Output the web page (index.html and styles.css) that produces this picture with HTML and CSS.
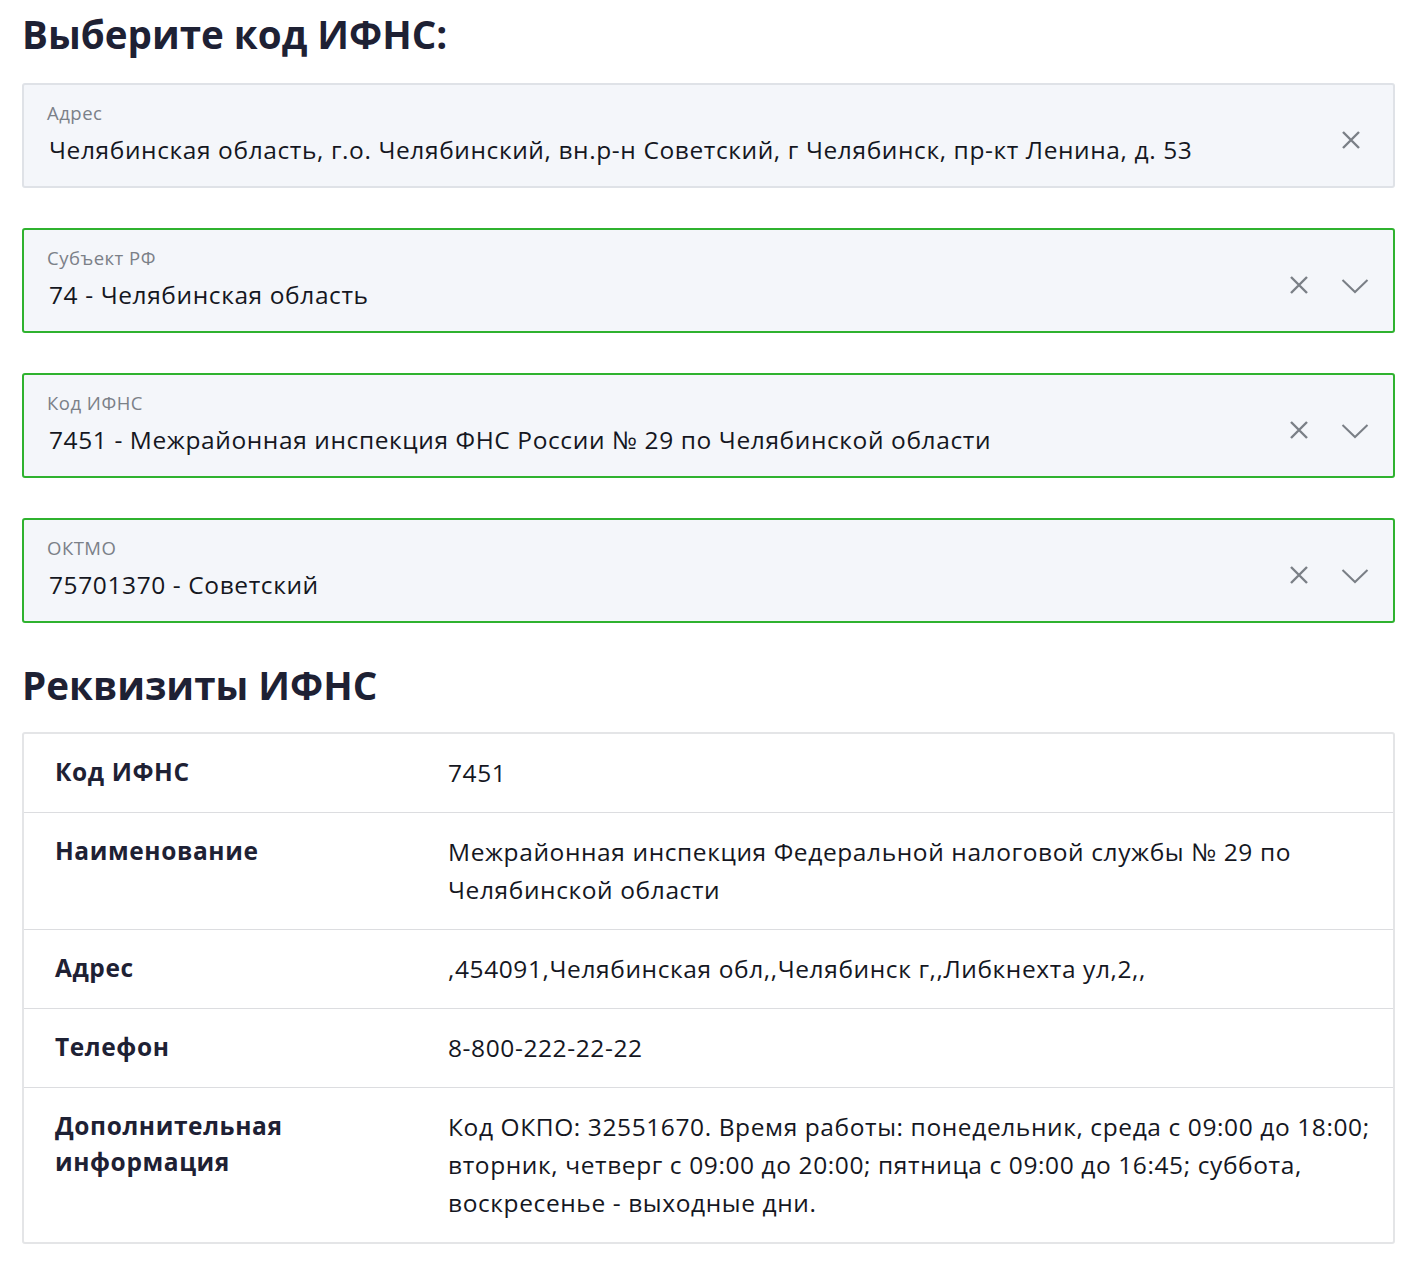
FILE: index.html
```html
<!DOCTYPE html>
<html lang="ru">
<head>
<meta charset="utf-8">
<title>Выберите код ИФНС</title>
<link rel="stylesheet" href="styles.css">
</head>
<body>
<main class="page">
  <h1 class="title">Выберите код ИФНС:</h1>

  <div class="fields">
    <div class="field">
      <div class="field-body">
        <div class="field-label">Адрес</div>
        <div class="field-value">Челябинская область, г.о. Челябинский, вн.р-н Советский, г Челябинск, пр-кт Ленина, д. 53</div>
      </div>
      <div class="field-icons field-icons-single">
        <svg class="icon-x" viewBox="0 0 20 20" width="20" height="20"><path d="M2 2 L18 18 M18 2 L2 18" stroke="#7a7f86" stroke-width="2.4" fill="none"/></svg>
      </div>
    </div>

    <div class="field field-ok">
      <div class="field-body">
        <div class="field-label">Субъект РФ</div>
        <div class="field-value">74 - Челябинская область</div>
      </div>
      <div class="field-icons">
        <svg class="icon-x" viewBox="0 0 20 20" width="20" height="20"><path d="M2 2 L18 18 M18 2 L2 18" stroke="#7a7f86" stroke-width="2.4" fill="none"/></svg>
        <svg class="icon-chev" viewBox="0 0 28 16" width="28" height="16"><path d="M1.5 2 L14 14 L26.5 2" stroke="#7a7f86" stroke-width="2" fill="none"/></svg>
      </div>
    </div>

    <div class="field field-ok">
      <div class="field-body">
        <div class="field-label">Код ИФНС</div>
        <div class="field-value">7451 - Межрайонная инспекция ФНС России № 29 по Челябинской области</div>
      </div>
      <div class="field-icons">
        <svg class="icon-x" viewBox="0 0 20 20" width="20" height="20"><path d="M2 2 L18 18 M18 2 L2 18" stroke="#7a7f86" stroke-width="2.4" fill="none"/></svg>
        <svg class="icon-chev" viewBox="0 0 28 16" width="28" height="16"><path d="M1.5 2 L14 14 L26.5 2" stroke="#7a7f86" stroke-width="2" fill="none"/></svg>
      </div>
    </div>

    <div class="field field-ok">
      <div class="field-body">
        <div class="field-label">ОКТМО</div>
        <div class="field-value">75701370 - Советский</div>
      </div>
      <div class="field-icons">
        <svg class="icon-x" viewBox="0 0 20 20" width="20" height="20"><path d="M2 2 L18 18 M18 2 L2 18" stroke="#7a7f86" stroke-width="2.4" fill="none"/></svg>
        <svg class="icon-chev" viewBox="0 0 28 16" width="28" height="16"><path d="M1.5 2 L14 14 L26.5 2" stroke="#7a7f86" stroke-width="2" fill="none"/></svg>
      </div>
    </div>
  </div>

  <h2 class="title title-2">Реквизиты ИФНС</h2>

  <div class="details">
    <div class="row">
      <div class="cell-key">Код ИФНС</div>
      <div class="cell-val">7451</div>
    </div>
    <div class="row">
      <div class="cell-key">Наименование</div>
      <div class="cell-val">Межрайонная инспекция Федеральной налоговой службы № 29 по Челябинской области</div>
    </div>
    <div class="row">
      <div class="cell-key">Адрес</div>
      <div class="cell-val">,454091,Челябинская обл,,Челябинск г,,Либкнехта ул,2,,</div>
    </div>
    <div class="row">
      <div class="cell-key">Телефон</div>
      <div class="cell-val">8-800-222-22-22</div>
    </div>
    <div class="row">
      <div class="cell-key">Дополнительная информация</div>
      <div class="cell-val">Код ОКПО: 32551670. Время работы: понедельник, среда с 09:00 до 18:00; вторник, четверг с 09:00 до 20:00; пятница с 09:00 до 16:45; суббота, воскресенье - выходные дни.</div>
    </div>
  </div>
</main>
</body>
</html>
```

FILE: styles.css
```css
* { box-sizing: border-box; }

html, body {
  margin: 0;
  padding: 0;
  background: #ffffff;
}

body {
  font-family: "Open Sans", "Noto Sans", "Liberation Sans", sans-serif;
  color: #15171f;
}

.page {
  padding: 8px 23px 24px 22px;
}

.title {
  margin: 0;
  font-size: 38.6px;
  line-height: 52px;
  font-weight: 700;
  color: #1e2134;
}

.fields {
  margin-top: 23px;
  display: flex;
  flex-direction: column;
  gap: 40px;
}

.field {
  height: 105px;
  display: flex;
  align-items: center;
  background: #f4f6fa;
  border: 2px solid #dfe2e7;
  border-radius: 3px;
  padding: 0 25px 0 23px;
}

.field-ok {
  border-color: #2fb22f;
}

.field-body {
  flex: 1;
  min-width: 0;
  padding-bottom: 4px;
}

.field-label {
  font-size: 18.5px;
  line-height: 24px;
  letter-spacing: 0.5px;
  color: #7b8088;
}

.field-value {
  margin-top: 8px;
  margin-left: 2px;
  font-size: 24.5px;
  line-height: 34px;
  letter-spacing: 0.6px;
  color: #15171f;
  white-space: nowrap;
}

.field-icons {
  display: flex;
  align-items: center;
  gap: 32px;
  padding-top: 8px;
}

.field-icons-single {
  padding-right: 7px;
}

.icon-x { display: block; }
.icon-chev { display: block; margin-top: 2px; margin-right: -1px; }

.title-2 {
  margin-top: 36px;
}

.details {
  margin-top: 21px;
  border: 2px solid #e4e5e7;
  border-radius: 3px;
  background: #fff;
}

.row {
  display: grid;
  grid-template-columns: 393px 1fr;
  border-top: 1px solid #dcdde0;
}

.row:first-child { border-top: 0; }

.cell-key,
.cell-val {
  padding: 20px 8px 20px 31px;
  font-size: 24.5px;
  line-height: 38px;
  letter-spacing: 0.6px;
}

.cell-key {
  font-weight: 700;
  color: #1e2134;
  line-height: 36px;
  letter-spacing: 0.6px;
  padding-right: 40px;
}

.cell-val {
  color: #15171f;
}
```
